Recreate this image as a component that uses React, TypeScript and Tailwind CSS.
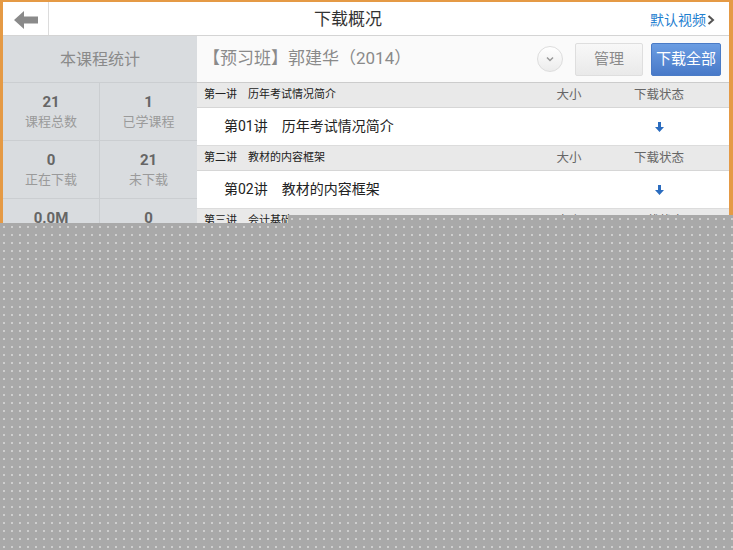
import React from "react";

const stats = [
  { n: "21", label: "课程总数" },
  { n: "1", label: "已学课程" },
  { n: "0", label: "正在下载" },
  { n: "21", label: "未下载" },
  { n: "0.0M", label: "已下载" },
  { n: "0", label: "已完成" },
];

const lectures = [
  { section: "第一讲　历年考试情况简介", item: "第01讲　历年考试情况简介" },
  { section: "第二讲　教材的内容框架", item: "第02讲　教材的内容框架" },
  { section: "第三讲　会计基础", item: "第03讲　会计基础" },
];

function DownloadArrow() {
  return (
    <svg width="9" height="10" viewBox="0 0 9 10">
      <path d="M3 0h3v5h3L4.5 10 0 5h3z" fill="#2b6cbf" />
    </svg>
  );
}

export default function App() {
  return (
    <div
      className="relative w-[733px] h-[550px] overflow-hidden bg-[#e59a45]"
      style={{ fontFamily: 'Roboto, "Noto Sans CJK SC", sans-serif' }}
    >
      <div className="ml-[3px] mr-[4px] mt-[2px] h-[548px] flex flex-col bg-white">
        {/* header */}
        <div className="h-[34px] flex items-center border-b border-[#d4d4d4] bg-white">
          <div className="w-[46px] h-full flex items-center justify-center border-r border-[#dcdcdc] pt-[2px]">
            <svg width="24" height="18" viewBox="0 0 24 18">
              <path d="M0 9 10 0v5.5h14v7H10V18z" fill="#8a8a8a" />
            </svg>
          </div>
          <div className="ml-[265px] pt-[3px] text-[17px] text-[#333]">下载概况</div>
          <div className="ml-auto mr-[14px] pt-[3px] flex items-center text-[14px] text-[#1f80d0]">
            默认视频
            <svg width="8" height="10" viewBox="0 0 8 10" className="ml-[1px]">
              <path d="M1.5 1 6 5l-4.5 4" stroke="#555" strokeWidth="2" fill="none" />
            </svg>
          </div>
        </div>

        <div className="flex flex-1">
          {/* sidebar */}
          <div className="w-[194px] bg-[#d9dcdf] flex flex-col">
            <div className="h-[47px] flex items-center justify-center pt-[2px] text-[16px] text-[#8a8a8a] border-b border-[#cbced1]">
              本课程统计
            </div>
            <div className="grid grid-cols-2">
              {stats.map((s, i) => (
                <div
                  key={i}
                  className={`h-[58px] flex flex-col items-center justify-center border-b border-[#cbced1] ${
                    i % 2 === 0 ? "border-r" : ""
                  }`}
                >
                  <div className="text-[15px] font-bold text-[#666] leading-[19px]">{s.n}</div>
                  <div className="text-[13px] text-[#9a9a9a] leading-[19px]">{s.label}</div>
                </div>
              ))}
            </div>
          </div>

          {/* main */}
          <div className="flex-1 flex flex-col">
            <div className="h-[47px] flex items-center pl-[6px] pr-[8px] bg-[#fafafa] border-b border-[#cccccc]">
              <div className="text-[17px] text-[#8a8a8a]">【预习班】郭建华（2014）</div>
              <div className="ml-auto w-[26px] h-[26px] rounded-full border border-[#dddddd] bg-gradient-to-b from-white to-[#ececec] flex items-center justify-center">
                <svg width="8" height="6" viewBox="0 0 8 6">
                  <path d="M1 1.5 4 4.5 7 1.5" stroke="#999" strokeWidth="1.5" fill="none" />
                </svg>
              </div>
              <div className="ml-[12px] w-[68px] h-[33px] rounded-[2px] border border-[#dedede] bg-gradient-to-b from-[#f8f8f8] to-[#e9e9e9] flex items-center justify-center text-[15px] text-[#8a8a8a]">
                管理
              </div>
              <div className="ml-[8px] w-[70px] h-[33px] rounded-[2px] border border-[#4a7bc6] bg-gradient-to-b from-[#6b9de2] to-[#4879c8] flex items-center justify-center text-[15px] text-white">
                下载全部
              </div>
            </div>

            {lectures.map((l, i) => (
              <div key={i}>
                <div className="h-[25px] flex items-center pl-[7px] pr-[30px] bg-[#e9e9e9] border-b border-[#d6d6d6]">
                  <div className="flex-1 text-[11px] text-[#222]">{l.section}</div>
                  <div className="w-[60px] text-center text-[12.5px] text-[#666]">大小</div>
                  <div className="ml-[20px] w-[80px] text-center text-[12.5px] text-[#666]">下载状态</div>
                </div>
                <div className="h-[38px] flex items-center pl-[27px] pr-[30px] bg-white border-b border-[#dcdcdc]">
                  <div className="flex-1 text-[14px] text-[#222]">{l.item}</div>
                  <div className="w-[60px]" />
                  <div className="ml-[20px] w-[80px] flex justify-center">
                    <DownloadArrow />
                  </div>
                </div>
              </div>
            ))}
          </div>
        </div>
      </div>

      {/* gray placeholder overlay */}
      <div className="absolute left-[288px] top-[215px] right-0 bottom-0 bg-[#a9a9a9] bg-[radial-gradient(#cfcfcf_0.7px,transparent_1px)] bg-size-[8px_8px]" />
      <div className="absolute left-0 top-[223px] right-0 bottom-0 bg-[#a9a9a9] bg-[radial-gradient(#cfcfcf_0.7px,transparent_1px)] bg-size-[8px_8px]" />
    </div>
  );
}
